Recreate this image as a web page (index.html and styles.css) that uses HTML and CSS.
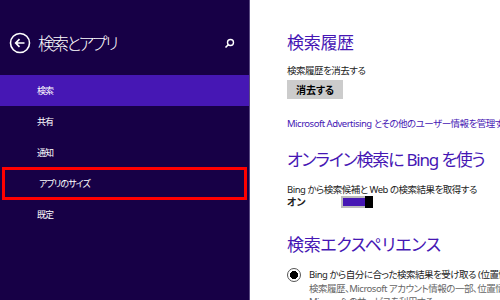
FILE: index.html
```html
<!DOCTYPE html>
<html lang="ja">
<head>
    <meta charset="UTF-8">
    <title>検索とアプリ</title>
    <link rel="stylesheet" href="styles.css">
</head>
<body>
<div class="screen">
    <div class="side">
        <div class="side_head">
            <svg class="back" width="22" height="22" viewBox="0 0 22 22">
                <circle cx="11" cy="11" r="9.5" fill="none" stroke="#fff" stroke-width="1.6"/>
                <path d="M15.5 11H7 M10.5 7.2L6.7 11L10.5 14.8" fill="none" stroke="#fff" stroke-width="1.7"/>
            </svg>
            <h1>検索とアプリ</h1>
            <svg class="find" width="11" height="11" viewBox="0 0 11 11">
                <circle cx="6.5" cy="4.5" r="3" fill="none" stroke="#fff" stroke-width="1.4"/>
                <path d="M4.5 6.5L1.5 9.5" stroke="#fff" stroke-width="1.6"/>
            </svg>
        </div>
        <ul class="menu">
            <li class="active">検索</li>
            <li>共有</li>
            <li>通知</li>
            <li class="marked">アプリのサイズ</li>
            <li>既定</li>
        </ul>
    </div>
    <div class="main">
        <h2>検索履歴</h2>
        <p class="label">検索履歴を消去する</p>
        <button class="btn">消去する</button>
        <p class="link">Microsoft Advertising とその他のユーザー情報を管理する</p>

        <h2 class="h_bing">オンライン検索に Bing を使う</h2>
        <p class="label label_bing">Bing から検索候補と Web の検索結果を取得する</p>
        <div class="toggle_row">
            <span class="on">オン</span>
            <span class="toggle"><span class="thumb"></span></span>
        </div>

        <h2 class="h_exp">検索エクスペリエンス</h2>
        <div class="radio_row">
            <span class="radio"></span>
            <div class="radio_text">
                <p>Bing から自分に合った検索結果を受け取る (位置情報を使う)</p>
                <p class="sub">検索履歴、Microsoft アカウント情報の一部、位置情報を使って</p>
                <p class="sub">Microsoft のサービスを利用する</p>
            </div>
        </div>
    </div>
</div>
</body>
</html>
```

FILE: styles.css
```css
*{
    padding: 0;
    margin: 0;
    box-sizing: border-box;
}
body{
    font-family: "Noto Sans", "Noto Sans CJK JP", sans-serif;
    font-feature-settings: "palt";
    width: 500px;
    height: 300px;
    overflow: hidden;
}
.screen{
    display: flex;
    height: 300px;
}
.side{
    width: 250px;
    flex-shrink: 0;
    background: #170046;
    border-right: 1px solid #5a4a82;
    color: #fff;
}
.side_head{
    display: flex;
    align-items: center;
    height: 42px;
    margin-top: 22px;
    padding-left: 9px;
    padding-right: 14px;
}
.side_head h1{
    font-weight: 300;
    font-size: 16.5px;
    margin-left: 7px;
    flex: 1;
    letter-spacing: -2.2px;
}
.menu{
    list-style: none;
    margin-top: 11px;
}
.menu li{
    height: 31px;
    line-height: 31px;
    padding-left: 37px;
    font-size: 9px;
    letter-spacing: -0.9px;
}
.menu li.active{
    background: #4617b4;
}
.menu li.marked{
    margin: -1px 2px -1px 2px;
    height: 33px;
    line-height: 27px;
    padding-left: 34px;
    border: 3px solid #ff0000;
}
.main{
    flex: 1;
    background: #fff;
    padding-left: 37px;
    padding-top: 30px;
    color: #222;
    white-space: nowrap;
    overflow: hidden;
}
.main h2{
    color: #4617b4;
    font-weight: 400;
    font-size: 17px;
    line-height: 26px;
    letter-spacing: -0.3px;
}
.label{
    font-size: 9.5px;
    letter-spacing: -0.5px;
    margin-top: 8px;
    line-height: 14px;
}
.label_bing{
    margin-top: 10px;
}
.btn{
    display: block;
    margin-top: 2px;
    width: 56px;
    height: 19px;
    border: none;
    background: #cccccc;
    font-family: inherit;
    font-feature-settings: "palt";
    font-weight: 700;
    font-size: 10px;
    color: #000;
}
.link{
    margin-top: 17px;
    font-size: 9.5px;
    letter-spacing: -0.5px;
    color: #4617b4;
}
.main .h_bing{
    margin-top: 17px;
    letter-spacing: -1.2px;
}
.toggle_row{
    display: flex;
    align-items: center;
    margin-top: -3px;
}
.on{
    font-weight: 700;
    font-size: 10px;
    width: 54px;
}
.toggle{
    display: flex;
    justify-content: flex-end;
    width: 32px;
    height: 12px;
    border: 2px solid #bcbcbc;
    background: #4617b4;
}
.thumb{
    width: 8px;
    height: 12px;
    margin-top: -2px;
    margin-right: -2px;
    background: #000;
}
.h_exp{
    margin-top: 23px;
}
.radio_row{
    display: flex;
    margin-top: 10px;
}
.radio{
    width: 14px;
    height: 14px;
    border: 1.5px solid #555;
    border-radius: 50%;
    margin-top: 0;
    margin-right: 8px;
    flex-shrink: 0;
    background: radial-gradient(circle, #000 3.8px, #fff 4.3px);
}
.radio_text{
    font-size: 9.5px;
    letter-spacing: -0.5px;
    line-height: 13.5px;
}
.radio_text .sub{
    color: #666;
}
```
